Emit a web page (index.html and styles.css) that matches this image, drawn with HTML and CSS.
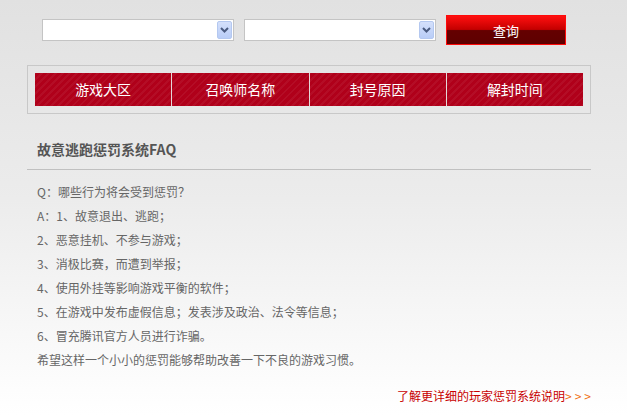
FILE: index.html
```html
<!DOCTYPE html>
<html lang="zh-CN">
<head>
  <meta charset="UTF-8">
  <title>故意逃跑惩罚系统</title>
  <link rel="stylesheet" href="styles.css">
</head>
<body>
  <div class="wrap">
    <div class="search">
      <div class="select">
        <span class="arrow">
          <svg width="9" height="6" viewBox="0 0 9 6"><path d="M1 1 L4.5 4.5 L8 1" fill="none" stroke="#4a5b80" stroke-width="2"/></svg>
        </span>
      </div>
      <div class="select">
        <span class="arrow">
          <svg width="9" height="6" viewBox="0 0 9 6"><path d="M1 1 L4.5 4.5 L8 1" fill="none" stroke="#4a5b80" stroke-width="2"/></svg>
        </span>
      </div>
      <button class="query">查询</button>
    </div>

    <div class="result-box">
      <div class="result-head">
        <div class="cell">游戏大区</div>
        <div class="cell">召唤师名称</div>
        <div class="cell">封号原因</div>
        <div class="cell">解封时间</div>
      </div>
    </div>

    <h2 class="faq-title">故意逃跑惩罚系统FAQ</h2>

    <ul class="faq">
      <li>Q：哪些行为将会受到惩罚？</li>
      <li>A：1、故意退出、逃跑；</li>
      <li>2、恶意挂机、不参与游戏；</li>
      <li>3、消极比赛，而遭到举报；</li>
      <li>4、使用外挂等影响游戏平衡的软件；</li>
      <li>5、在游戏中发布虚假信息；发表涉及政治、法令等信息；</li>
      <li>6、冒充腾讯官方人员进行诈骗。</li>
      <li>希望这样一个小小的惩罚能够帮助改善一下不良的游戏习惯。</li>
    </ul>

    <div class="more">
      <a href="#">了解更详细的玩家惩罚系统说明<span class="gt">&gt;&gt;&gt;</span></a>
    </div>
  </div>
</body>
</html>
```

FILE: styles.css
```css
html {
  background: #fff;
}
body {
  margin: 0;
  min-height: 415px;
  font-family: "Noto Sans CJK SC", "Liberation Sans", sans-serif;
  font-size: 12px;
  color: #666;
  background: linear-gradient(#e1e1e1, #ececec 200px, #fdfdfd 390px, #fff);
}
.wrap {
  width: 564px;
  margin-left: 27px;
  padding-top: 15px;
}
.search {
  display: flex;
  align-items: center;
  height: 30px;
  padding-left: 15px;
}
.select {
  box-sizing: border-box;
  width: 192px;
  height: 22px;
  border: 1px solid #c4c4c4;
  background: #fff;
  margin-right: 10px;
  display: flex;
  justify-content: flex-end;
  align-items: center;
  padding-right: 1px;
}
.arrow {
  width: 15px;
  height: 18px;
  border: 1px solid #b4c8f0;
  border-radius: 2px;
  background: linear-gradient(#d4e0fb, #b9cdf7);
  display: flex;
  align-items: center;
  justify-content: center;
  box-sizing: border-box;
}
.query {
  width: 120px;
  height: 30px;
  border: 1px solid #ff0a0a;
  color: #fff;
  font-family: inherit;
  font-size: 13px;
  padding: 0;
  background: linear-gradient(#ff1010, #c40000 48%, #640000 52%, #5e0000);
  cursor: pointer;
}
.result-box {
  margin-top: 20px;
  border: 1px solid #c8c8c8;
  padding: 7px;
}
.result-head {
  display: flex;
  height: 33px;
  background-color: #b0001a;
  background-image: repeating-linear-gradient(-45deg, rgba(255,255,255,0.05) 0 2px, rgba(0,0,0,0) 2px 5px);
}
.cell {
  flex: 1;
  color: #fff;
  font-size: 14px;
  text-align: center;
  line-height: 33px;
}
.cell + .cell {
  border-left: 1px solid #e4d8d8;
}
.faq-title {
  margin: 24px 0 0;
  padding: 0 0 9px 10px;
  font-size: 14px;
  line-height: 22px;
  color: #555;
  border-bottom: 1px solid #c0c0c0;
}
.faq {
  list-style: none;
  margin: 10px 0 0;
  padding: 0 0 0 10px;
}
.faq li {
  line-height: 24px;
}
.more {
  margin-top: 12px;
  text-align: right;
  line-height: 24px;
}
.more a {
  color: #c80000;
  text-decoration: none;
}
.gt {
  color: #f07010;
  letter-spacing: 3px;
  margin-right: -3px;
}
```
